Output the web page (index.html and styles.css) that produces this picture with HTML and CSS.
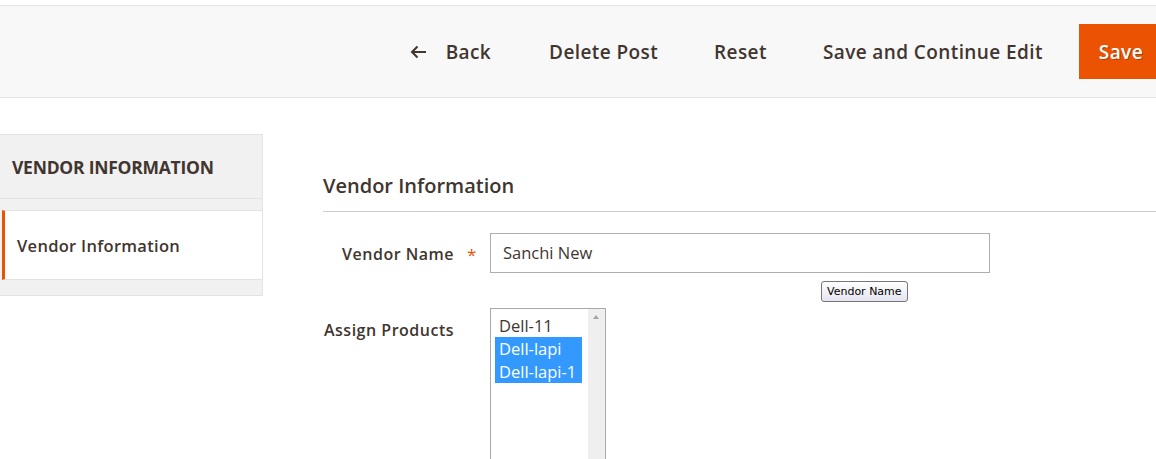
FILE: index.html
```html
<!DOCTYPE html>
<html>
<head>
<meta charset="utf-8">
<link rel="stylesheet" href="styles.css">
</head>
<body>
<div class="page-actions">
  <div class="actions">
    <button class="act back">
      <svg class="arrow" width="17" height="14" viewBox="0 0 17 14"><path d="M16 7H2M7.5 1.5L2 7l5.5 5.5" fill="none" stroke="#41362f" stroke-width="2"/></svg>
      <span>Back</span>
    </button>
    <button class="act">Delete Post</button>
    <button class="act">Reset</button>
    <button class="act">Save and Continue Edit</button>
    <button class="act primary">Save</button>
  </div>
</div>

<div class="layout">
  <aside class="side">
    <div class="side-title">VENDOR INFORMATION</div>
    <div class="side-body">
      <div class="side-item">Vendor Information</div>
    </div>
  </aside>

  <main class="main">
    <h2 class="legend">Vendor Information</h2>
    <div class="field">
      <label class="label">Vendor Name</label>
      <span class="req">*</span>
      <div class="control">
        <div class="input">Sanchi New</div>
        <div class="tooltip">Vendor Name</div>
      </div>
    </div>
    <div class="field field-multi">
      <label class="label label-top">Assign Products</label>
      <span class="req"></span>
      <div class="control">
        <div class="listbox">
          <div class="options">
            <div class="opt">Dell-11</div>
            <div class="opt sel">Dell-lapi</div>
            <div class="opt sel">Dell-lapi-1</div>
          </div>
          <div class="scroll"><span class="up"></span></div>
        </div>
      </div>
    </div>
  </main>
</div>
</body>
</html>
```

FILE: styles.css
```css
* { box-sizing: border-box; }
html, body { margin: 0; padding: 0; background: #fff; overflow: hidden; }
body {
  font-family: "Open Sans", "Noto Sans", sans-serif;
  color: #41362f;
  width: 1156px;
  height: 459px;
}

.page-actions {
  margin-top: 5px;
  border-top: 1px solid #e3e3e3;
  border-bottom: 1px solid #e3e3e3;
  background: #f8f8f8;
  height: 93px;
  display: flex;
  align-items: center;
  justify-content: flex-end;
}
.actions { display: flex; align-items: center; }
.act {
  font-family: inherit;
  font-size: 19px;
  font-weight: 600;
  letter-spacing: 0.4px;
  color: #41362f;
  background: transparent;
  border: 0;
  padding: 0 28px;
  height: 55px;
  display: flex;
  align-items: center;
  gap: 19px;
  cursor: pointer;
}
.act.back { padding-left: 0; padding-right: 30px; }
.act.primary {
  background: #eb5202;
  color: #fff;
  padding: 0 13px 0 20px;
  margin-left: 8px;
  text-shadow: 1px 1px 0 rgba(0,0,0,0.25);
}
.arrow { display: block; }

.layout {
  display: flex;
  margin-top: 36px;
  align-items: flex-start;
}
.side {
  width: 263px;
  flex: none;
  background: #f1f1f1;
  border-top: 1px solid #e3e3e3;
  border-right: 1px solid #e3e3e3;
  border-bottom: 1px solid #e3e3e3;
}
.side-title {
  height: 64px;
  padding-left: 12px;
  display: flex;
  align-items: center;
  font-size: 17.5px;
  font-weight: 700;
  border-bottom: 1px solid #e3e3e3;
  letter-spacing: -0.25px;
}
.side-body { padding: 11px 0 15px; }
.side-item {
  margin-left: 2px;
  background: #fff;
  border-top: 1px solid #e3e3e3;
  border-bottom: 1px solid #e3e3e3;
  border-left: 3px solid #eb5202;
  height: 70px;
  display: flex;
  align-items: center;
  padding-left: 12px;
  font-size: 16.5px;
  font-weight: 600;
  letter-spacing: 0.3px;
}

.main {
  flex: 1;
  margin-left: 60px;
}
.legend {
  margin: 0;
  font-size: 20px;
  font-weight: 600;
  padding-top: 38px;
  height: 78px;
  line-height: 27px;
  border-bottom: 1px solid #ccc;
}
.field {
  display: flex;
  margin-top: 21px;
}
.label {
  width: 131px;
  text-align: right;
  font-size: 16px;
  font-weight: 600;
  letter-spacing: 0.5px;
  line-height: 42px;
  white-space: nowrap;
}
.label-top { line-height: 44px; }
.req {
  width: 36px;
  color: #eb5202;
  font-size: 17px;
  line-height: 44px;
  padding-left: 13px;
}
.control { position: relative; }
.input {
  width: 500px;
  height: 40px;
  border: 1px solid #adadad;
  padding-left: 12px;
  font-size: 16.5px;
  line-height: 38px;
}
.tooltip {
  position: absolute;
  left: 331px;
  top: 48px;
  height: 21px;
  padding: 0 5px;
  border: 1px solid #767676;
  border-radius: 3px;
  background: linear-gradient(#ffffff, #e4e5f0);
  font-family: "DejaVu Sans", "Liberation Sans", sans-serif;
  font-size: 11px;
  line-height: 19px;
  color: #000;
  white-space: nowrap;
}
.field-multi { margin-top: 31px; }
.listbox {
  width: 116px;
  height: 170px;
  border: 1px solid #a9a9a9;
  display: flex;
  background: #fff;
}
.options {
  width: 96px;
  padding: 5px 0 0 4px;
}
.opt {
  width: 87px;
  height: 23px;
  line-height: 23px;
  padding-left: 4px;
  font-size: 16.5px;
  color: #41362f;
  white-space: nowrap;
}
.opt.sel { background: #3399ff; color: #fff; }
.scroll {
  width: 17px;
  margin-left: auto;
  background: #efefef;
  position: relative;
}
.up {
  position: absolute;
  left: 5px;
  top: 6px;
  width: 0;
  height: 0;
  border-left: 3.5px solid transparent;
  border-right: 3.5px solid transparent;
  border-bottom: 4px solid #a3a3a3;
}
```
